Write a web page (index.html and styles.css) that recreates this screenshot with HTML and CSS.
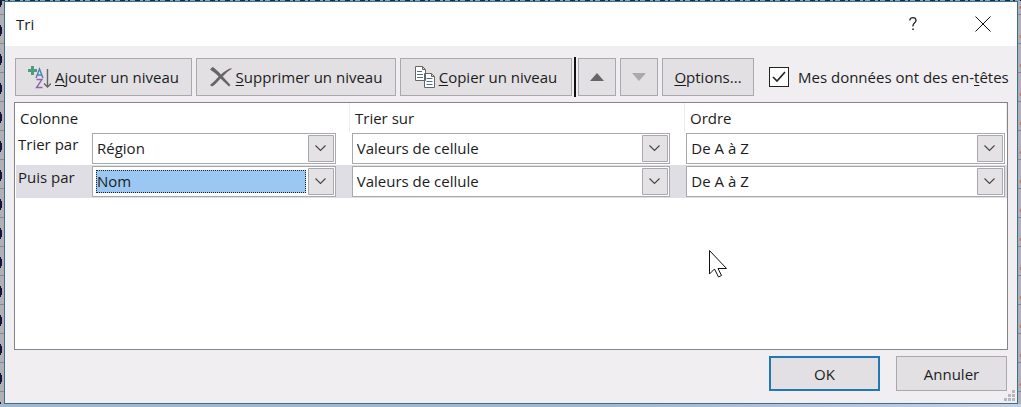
FILE: index.html
```html
<!DOCTYPE html>
<html lang="fr">
<head>
<meta charset="utf-8">
<title>Tri</title>
<link rel="stylesheet" href="styles.css">
</head>
<body>
<main class="dialog">
  <header class="titlebar">
    <h1 class="title">Tri</h1>
    <button class="caption" aria-label="Aide"><svg width="8" height="16" viewBox="0 0 10 18" fill="none" stroke="#222" stroke-width="1.6"><path d="M1 4.500C1 2 3 1 5 1s3.700 1.200 3.700 3.500C8.700 7.500 4.800 7.700 4.800 12"/><path d="M4 15.500h2" stroke-width="2"/></svg></button>
    <button class="caption" aria-label="Fermer"><svg width="16" height="16" viewBox="0 0 16 16" stroke="#111" stroke-width="1"><path d="M.5.5l15 15M15.500.5l-15 15"/></svg></button>
  </header>
  <div class="toolbar">
    <button class="btn add"><svg width="23" height="23" viewBox="0 0 23 23" fill="none"><path d="M4.500 0v9M0 4.500h9" stroke="#4f9c7c" stroke-width="3"/><path d="M8 12l3.500-9L15 12M9 9h5" stroke="#4b82b8" stroke-width="1.400"/><path d="M8.500 13.500H14L8.500 21.500h6" stroke="#9465ad" stroke-width="1.400"/><path d="M19.500 3v18M16 17.500l3.500 3.500 3.500-3.500" stroke="#666" stroke-width="1.400"/></svg><span><u>A</u>jouter un niveau</span></button>
    <button class="btn remove"><svg width="22" height="20" viewBox="0 0 22 20" fill="#666"><path d="M0 2.500L2.500 0Q5 1 11 7.500 16 2.500 21.500 1v1Q17 4.500 12.700 9.500L20.500 18l-1.500 1.500L10.500 11.500Q5 18 2 19.500L0 18Q4 15 8.700 9.500 4 5 0 2.500Z"/></svg><span><u>S</u>upprimer un niveau</span></button>
    <button class="btn copy"><svg width="20" height="22" viewBox="0 0 20 22" fill="#fff" stroke="#666"><path d="M.5.5h7l3 3v11H.5zM7.500.5v3h3M9.500 7.500h7l3 3v11h-10zM16.500 7.500v3h3"/><path d="M2 5.500h5M2 8.500h6M2 11.500h6M11.500 12.500h6M11.500 15.500h6M11.500 18.500h6" stroke="#4c7388"/></svg><span><u>C</u>opier un niveau</span></button>
    <span class="separator"></span>
    <button class="btn arrow" aria-label="Monter"><svg width="14" height="8" viewBox="0 0 14 8"><path d="M0 8l7-8 7 8z" fill="#666"/></svg></button>
    <button class="btn arrow" aria-label="Descendre"><svg width="14" height="8" viewBox="0 0 14 8"><path d="M0 0h14L7 8z" fill="#aaa"/></svg></button>
    <button class="btn options"><span><u>O</u>ptions...</span></button>
    <label class="check"><input type="checkbox" checked><span>Mes données ont des en-<u>t</u>êtes</span></label>
  </div>
  <section class="levels">
    <div class="head"><span>Colonne</span><span>Trier sur</span><span>Ordre</span></div>
    <div class="row">
      <label for="c1">Trier par</label>
      <span class="field first"><select id="c1"><option>Région</option></select></span>
      <span class="field"><select aria-label="Trier sur"><option>Valeurs de cellule</option></select></span>
      <span class="field"><select aria-label="Ordre"><option>De A à Z</option></select></span>
    </div>
    <div class="row current">
      <label for="c2">Puis par</label>
      <span class="field first focus"><select id="c2"><option>Nom</option></select></span>
      <span class="field"><select aria-label="Trier sur"><option>Valeurs de cellule</option></select></span>
      <span class="field"><select aria-label="Ordre"><option>De A à Z</option></select></span>
    </div>
    <svg class="pointer" width="19" height="28" viewBox="0 0 19 28" fill="#fff" stroke="#111" stroke-width="1"><path d="M.5.5v23.500l5-5 4 8 3-1.500-3.500-7H17.500z"/></svg>
  </section>
  <footer class="actions">
    <button class="btn ok">OK</button>
    <button class="btn cancel">Annuler</button>
  </footer>
  <svg class="grip" width="11" height="11" viewBox="0 0 11 11" fill="#b9b7bb"><path d="M8 0h3v3H8zM8 4h3v3H8zM4 4h3v3H4zM8 8h3v3H8zM4 8h3v3H4zM0 8h3v3H0z"/></svg>
</main>
</body>
</html>
```
FILE: styles.css
```css
* { box-sizing: border-box; }
body {
  margin: 0;
  min-height: 100vh;
  padding: 1px 3px 3px 4px;
  display: flex;
  background:
    repeating-linear-gradient(90deg, #1d2b38 0 5px, #8aa5b5 5px 8px, #1d2b38 8px 10px, #8aa5b5 10px 15px) top / 100% 1px no-repeat,
    linear-gradient(90deg, #a3b8ca 60%, #c3d0e2) bottom / 100% 3px no-repeat,
    radial-gradient(ellipse 2px 6px at 0 50%, #14143c 90%, transparent) 0 -13px / 4px 29px repeat-y,
    radial-gradient(circle at 100% 50%, #c07a62 1px, transparent 2px) right 22px / 3px 29px repeat-y,
    repeating-linear-gradient(#b3b0b5 0 14px, #89878c 14px 15px, #b3b0b5 15px 29px);
  font: 15px/22px "Open Sans", "Noto Sans", sans-serif;
  color: #1c1c1c;
}
.dialog {
  position: relative;
  flex: 1;
  min-width: 0;
  display: flex;
  flex-direction: column;
  border: 1px solid #38718f;
  background: #f0eef1;
}
.titlebar {
  display: flex;
  align-items: center;
  height: 44px;
  padding: 0 12px 0 11px;
  background: #fff;
}
.title { flex: 1; margin: 0; font-size: 15px; font-weight: 400; }
.caption {
  display: grid;
  place-items: center;
  width: 44px;
  height: 44px;
  padding: 0;
  border: 0;
  background: none;
}
.caption + .caption { margin-left: 26px; }
.toolbar { display: flex; align-items: center; gap: 4px; padding: 11px 8px 5px 10px; }
.btn {
  display: flex;
  flex-shrink: 0;
  align-items: center;
  justify-content: center;
  gap: 4px;
  height: 38px;
  padding: 0;
  border: 1px solid #a9a8ac;
  background: #e2e0e3;
  color: inherit;
  font: inherit;
  white-space: nowrap;
}
u { text-underline-offset: 2px; text-decoration-thickness: 1px; }
.add { width: 177px; }
.remove { width: 200px; }
.copy { width: 172px; }
.arrow { width: 38px; }
.options { width: 92px; }
.separator { flex: none; width: 2px; height: 40px; margin: 0 -2px; background: #111; }
.check { display: flex; align-items: center; gap: 9px; margin-left: 11px; white-space: nowrap; }
.check input {
  appearance: none;
  flex: none;
  width: 20px;
  height: 20px;
  margin: 0;
  border: 1px solid #222;
  background: #fff url("data:image/svg+xml,%3Csvg xmlns='http://www.w3.org/2000/svg' viewBox='0 0 18 18' fill='none' stroke='%23222' stroke-width='1.6'%3E%3Cpath d='M3 9l4 4 8-9'/%3E%3C/svg%3E");
}
.levels {
  position: relative;
  flex: 1;
  margin: 0 9px;
  border: 1px solid #85848a;
  background: #fff;
}
.head {
  display: grid;
  grid-template-columns: 335fr 335fr 322fr;
  height: 29px;
}
.head span { padding: 4px 0 0 5px; border-right: 1px solid #ececee; }
.row { display: flex; height: 33px; margin-left: 1px; padding: 1px 2px; }
.row label { width: 74px; }
.field { position: relative; flex: 319 1 0; min-width: 0; }
.field.first { flex-grow: 244; }
.field + .field { margin-left: 16px; }
.current { background: #e0dee5; }
select {
  display: block;
  appearance: none;
  width: 100%;
  height: 31px;
  padding: 0 30px 1px 4px;
  border: 1px solid #a9a8ac;
  border-radius: 0;
  color: inherit;
  font: inherit;
  background: #fff url("data:image/svg+xml,%3Csvg xmlns='http://www.w3.org/2000/svg' width='26' height='27' fill='none'%3E%3Cpath d='M.5.5h25v26H.5z' fill='%23e4e2e5' stroke='%23a9a8ac'/%3E%3Cpath d='M7.500 10.500l5 5 5-5' stroke='%23444' stroke-width='1.100'/%3E%3C/svg%3E") no-repeat right 1px center;
}
.focus::before {
  content: "";
  position: absolute;
  inset: 4px 30px 4px 4px;
  border: 1px dotted #222;
  background: #9bc8f2;
  pointer-events: none;
}
.focus select { position: relative; background-color: transparent; }
.focus { background: #fff; }
.pointer { position: absolute; left: 70%; top: 147px; }
.grip { position: absolute; right: 2px; bottom: 2px; }
.actions { display: flex; justify-content: flex-end; gap: 16px; padding: 6px 10px 12px; }
.actions .btn { width: 111px; height: 35px; }
.actions .ok { border: 2px solid #1f78b8; }
```
